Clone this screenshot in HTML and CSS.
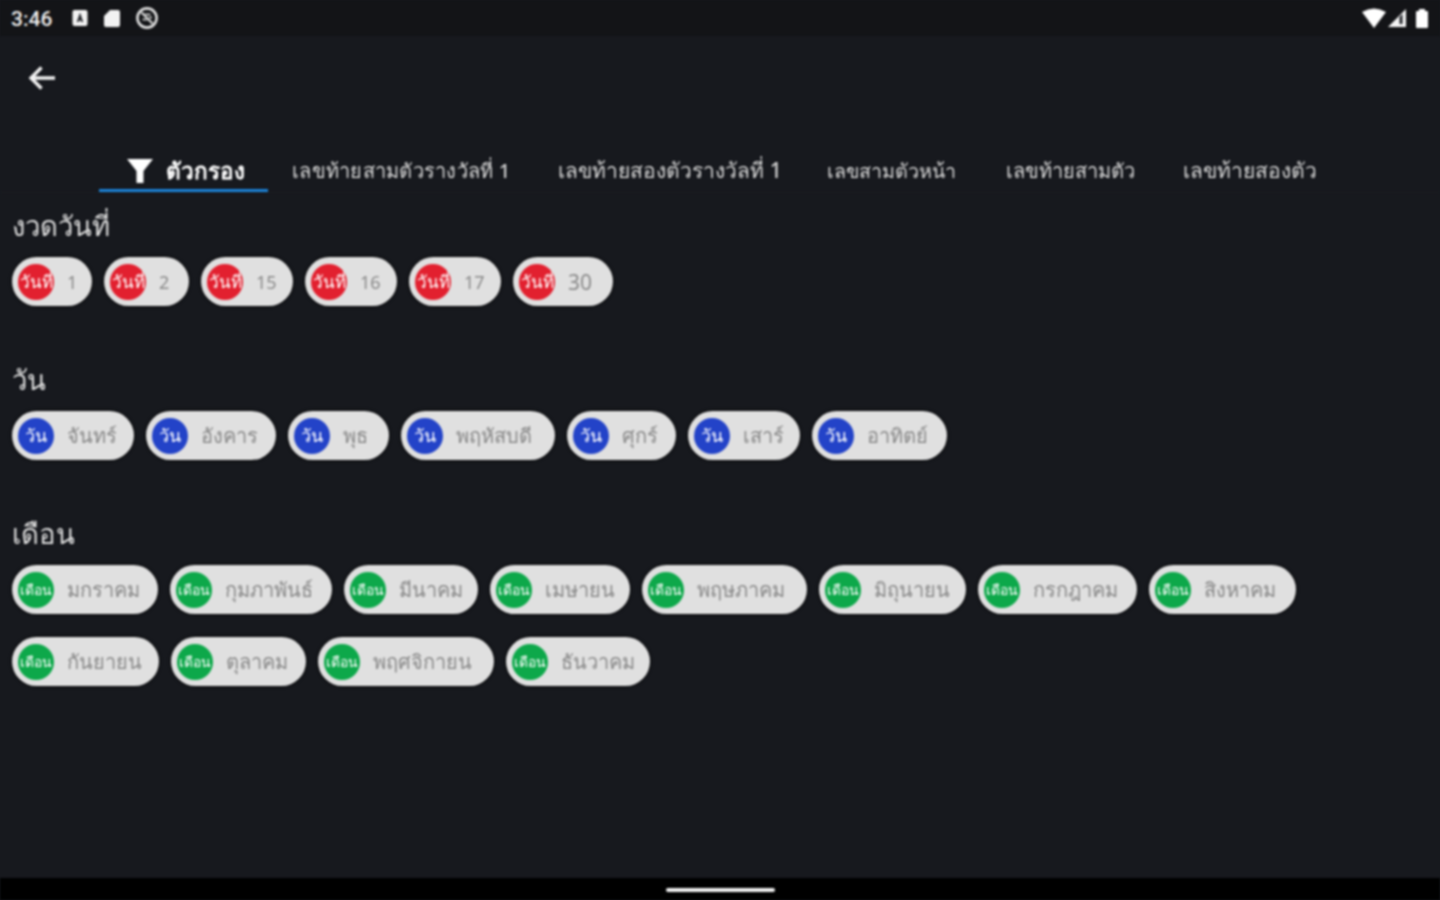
FILE: index.html
```html
<!DOCTYPE html>
<html lang="th">
<head>
<meta charset="utf-8">
<title>ตัวกรอง</title>
<link rel="stylesheet" href="styles.css">
</head>
<body>
<div class="screen">
  <header class="statusbar">
    <div class="status-left">
      <span class="clock">3:46</span>
      <svg class="s-icon" width="18" height="18" viewBox="0 0 18 18"><rect x="1.5" y="1" width="15" height="16" rx="2" fill="#f2f2f2"/><path d="M9 3.5 5.8 13h1.9l.5-1.6h1.6l.5 1.6h1.900L9 3.500Z" fill="#23252a"/></svg>
      <svg class="s-icon" width="18" height="18" viewBox="0 0 18 18"><path d="M7 1h8a2 2 0 0 1 2 2v13a2 2 0 0 1-2 2H3a2 2 0 0 1-2-2V7Z" fill="#f2f2f2"/></svg>
      <svg class="s-icon" width="24" height="24" viewBox="0 0 24 24"><circle cx="12" cy="12" r="9.6" fill="none" stroke="#dedede" stroke-width="2.6"/><path d="M6.5 6.5 17.5 17.5" stroke="#dedede" stroke-width="2" fill="none"/><path d="M9 8.5h6.5M7.5 13.5h5M14 11.5h3" stroke="#bdbdbd" stroke-width="2" fill="none"/></svg>
    </div>
    <div class="status-right">
      <svg width="26" height="22" viewBox="0 0 26 22"><path d="M1 5Q13-2 25 5L13 21Z" fill="#fff"/></svg>
      <svg width="20" height="22" viewBox="0 0 20 22"><path d="M19 2V20H1Z" fill="#f4f4f4"/><path d="M12.5 10v7h3V7Z" fill="#23252a"/></svg>
      <svg class="battery" width="14" height="22" viewBox="0 0 14 22"><path d="M4 2h6v2h2a1 1 0 0 1 1 1v15a1 1 0 0 1-1 1H2a1 1 0 0 1-1-1V5a1 1 0 0 1 1-1h2Z" fill="#fff"/></svg>
    </div>
  </header>

  <div class="toolbar">
    <svg class="back" width="28" height="28" viewBox="0 0 28 28"><path d="M28 14H5M14.500 3.500 4 14l10.500 10.500" fill="none" stroke="#f2f2f2" stroke-width="3.400"/></svg>
  </div>

  <nav class="tabs">
    <div class="tab tab-active">
      <svg width="26" height="26" viewBox="0 0 26 26"><path d="M0 1h26L16.500 13v12h-7V13Z" fill="#fff"/></svg>
      <span>ตัวกรอง</span>
    </div>
    <div class="tab">เลขท้ายสามตัวรางวัลที่ 1</div>
    <div class="tab">เลขท้ายสองตัวรางวัลที่ 1</div>
    <div class="tab">เลขสามตัวหน้า</div>
    <div class="tab">เลขท้ายสามตัว</div>
    <div class="tab">เลขท้ายสองตัว</div>
  </nav>

  <main class="content">
    <section class="group">
      <h2>งวดวันที่</h2>
      <div class="chips chips-date">
        <div class="chip"><span class="dot red">วันที่</span>1</div>
        <div class="chip"><span class="dot red">วันที่</span>2</div>
        <div class="chip"><span class="dot red">วันที่</span>15</div>
        <div class="chip"><span class="dot red">วันที่</span>16</div>
        <div class="chip"><span class="dot red">วันที่</span>17</div>
        <div class="chip"><span class="dot red">วันที่</span>30</div>
      </div>
    </section>
    <section class="group">
      <h2>วัน</h2>
      <div class="chips chips-day">
        <div class="chip"><span class="dot blue">วัน</span>จันทร์</div>
        <div class="chip"><span class="dot blue">วัน</span>อังคาร</div>
        <div class="chip"><span class="dot blue">วัน</span>พุธ</div>
        <div class="chip"><span class="dot blue">วัน</span>พฤหัสบดี</div>
        <div class="chip"><span class="dot blue">วัน</span>ศุกร์</div>
        <div class="chip"><span class="dot blue">วัน</span>เสาร์</div>
        <div class="chip"><span class="dot blue">วัน</span>อาทิตย์</div>
      </div>
    </section>
    <section class="group">
      <h2>เดือน</h2>
      <div class="chips chips-month">
        <div class="chip"><span class="dot green">เดือน</span>มกราคม</div>
        <div class="chip"><span class="dot green">เดือน</span>กุมภาพันธ์</div>
        <div class="chip"><span class="dot green">เดือน</span>มีนาคม</div>
        <div class="chip"><span class="dot green">เดือน</span>เมษายน</div>
        <div class="chip"><span class="dot green">เดือน</span>พฤษภาคม</div>
        <div class="chip"><span class="dot green">เดือน</span>มิถุนายน</div>
        <div class="chip"><span class="dot green">เดือน</span>กรกฎาคม</div>
        <div class="chip"><span class="dot green">เดือน</span>สิงหาคม</div>
        <div class="chip"><span class="dot green">เดือน</span>กันยายน</div>
        <div class="chip"><span class="dot green">เดือน</span>ตุลาคม</div>
        <div class="chip"><span class="dot green">เดือน</span>พฤศจิกายน</div>
        <div class="chip"><span class="dot green">เดือน</span>ธันวาคม</div>
      </div>
    </section>
  </main>

  <footer class="navbar"><span class="home-pill"></span></footer>
</div>
</body>
</html>
```
FILE: styles.css
```css
* { box-sizing: border-box; }
html, body { margin: 0; height: 100%; }
body {
  background: #17191e;
  font-family: "Noto Sans", "Roboto", "Noto Sans CJK SC", sans-serif;
  color: #e8e8e8;
}
.screen {
  width: 1440px;
  height: 900px;
  display: flex;
  flex-direction: column;
  overflow: hidden;
  filter: blur(0.8px);
}
.statusbar {
  height: 36px;
  flex: none;
  background: #131417;
  display: flex;
  justify-content: space-between;
  align-items: center;
  padding: 0 11px 0 11px;
}
.status-left { display: flex; align-items: center; gap: 14px; }
.status-right { display: flex; align-items: center; }
.battery { margin-left: 8px; }
.clock { font: 500 21px/1 "Roboto", sans-serif; color: #eee; width: 43px; margin-right: 3px; padding-top: 2px; }
.toolbar {
  height: 84px;
  flex: none;
  padding: 28px 0 0 27px;
}
.back { display: block; }
.tabs {
  height: 73px;
  flex: none;
  display: flex;
  align-items: stretch;
  padding-left: 99px;
  border-bottom: 1px solid #1b1d22;
}
.tab {
  display: flex;
  align-items: center;
  padding: 32px 24px 0;
  font-size: 20px;
  font-weight: 500;
  color: #d4d4d4;
  white-space: nowrap;
  border-bottom: 3px solid transparent;
}
.tab:nth-child(2) { letter-spacing: 0.25px; }
.tab:nth-child(3) { font-size: 21px; margin-right: -3px; }
.tab:nth-child(4) { font-size: 19.7px; }
.tab:nth-child(5) { margin-left: 2px; }
.tab:nth-child(6) { font-size: 21px; }
.tab-active {
  width: 169px;
  color: #fff;
  font-size: 22.5px;
  font-weight: 700;
  gap: 13px;
  padding-left: 28px;
  padding-right: 0;
  border-bottom-color: #1c82d8;
}
.content { flex: 1; padding: 13px 12px 0; }
.group { margin-bottom: 54px; }
.group h2 {
  margin: 0 0 11px;
  font-size: 27.5px;
  line-height: 40px;
  font-weight: 400;
  color: #dcdcdc;
}
.chips { display: flex; flex-wrap: wrap; gap: 23px 12px; }
.chip {
  height: 49px;
  display: flex;
  align-items: center;
  gap: 13px;
  padding: 0 0 0 6px;
  border-radius: 25px;
  background: #e0e0e0;
  color: #8a8a8a;
  font-size: 20px;
  white-space: nowrap;
  box-shadow: 0 0 2px 1px #08090b;
}
.chips-date .chip { font-size: 18px; width: 92px; }
.chips-date .chip:nth-child(1) { width: 80px; }
.chips-date .chip:nth-child(2) { width: 85px; }
.chips-date .chip:nth-child(6) { width: 100px; font-size: 21px; }
.chips-day .chip:nth-child(1) { width: 122px; }
.chips-day .chip:nth-child(2) { width: 130px; }
.chips-day .chip:nth-child(3) { width: 101px; }
.chips-day .chip:nth-child(4) { width: 154px; }
.chips-day .chip:nth-child(5) { width: 109px; }
.chips-day .chip:nth-child(6) { width: 112px; }
.chips-day .chip:nth-child(7) { width: 135px; }
.chips-month .chip:nth-child(1) { width: 146px; }
.chips-month .chip:nth-child(2) { width: 162px; }
.chips-month .chip:nth-child(3) { width: 134px; }
.chips-month .chip:nth-child(4) { width: 140px; }
.chips-month .chip:nth-child(5) { width: 165px; }
.chips-month .chip:nth-child(6) { width: 147px; }
.chips-month .chip:nth-child(7) { width: 159px; }
.chips-month .chip:nth-child(8) { width: 147px; }
.chips-month .chip:nth-child(9) { width: 147px; }
.chips-month .chip:nth-child(10) { width: 135px; }
.chips-month .chip:nth-child(11) { width: 176px; }
.chips-month .chip:nth-child(12) { width: 144px; }
.dot {
  width: 36px;
  height: 36px;
  border-radius: 50%;
  flex: none;
  display: flex;
  align-items: center;
  justify-content: center;
  overflow: hidden;
  color: #fff;
  font-size: 15px;
}
.red { background: #e2202f; font-size: 17px; }
.blue { background: #2343c8; font-size: 18px; }
.green { background: #0da84a; font-size: 14px; }
.navbar {
  height: 22px;
  flex: none;
  margin-top: auto;
  background: #000;
  display: flex;
  justify-content: center;
  align-items: flex-end;
  padding-bottom: 8px;
}
.home-pill {
  width: 109px;
  height: 4px;
  border-radius: 2px;
  background: #f0f0f0;
}
```
